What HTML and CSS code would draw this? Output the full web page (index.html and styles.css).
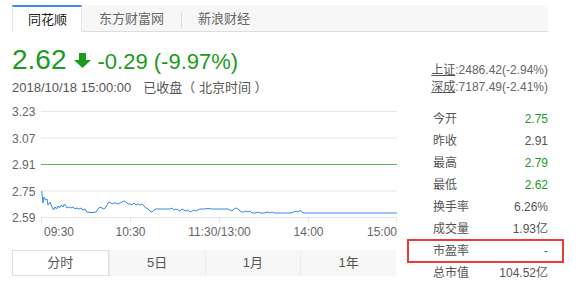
FILE: index.html
```html
<!DOCTYPE html>
<html lang="zh-CN">
<head>
  <meta charset="UTF-8" />
  <meta name="viewport" content="width=device-width, initial-scale=1.0" />
  <title>行情</title>
  <link rel="stylesheet" href="styles.css">
</head>
<body>
  <div class="tabs">
    <div class="tab active">同花顺</div>
    <div class="tab">东方财富网</div>
    <div class="tab sep">新浪财经</div>
  </div>

  <div class="quote">
    <div class="left">
      <div class="price-row">
        <span class="price">2.62</span>
        <svg class="arrow" width="17" height="15" viewBox="0 0 17 15">
          <polygon points="5,0 12,0 12,7 17,7 8.5,15 0,7 5,7" fill="#1b9b1b"/>
        </svg>
        <span class="change">-0.29 (-9.97%)</span>
      </div>
      <div class="time">2018/10/18 15:00:00<span class="state">已收盘（ 北京时间 ）</span></div>
    </div>
    <div class="index">
      <div><a href="#">上证</a>:2486.42(-2.94%)</div>
      <div><a href="#">深成</a>:7187.49(-2.41%)</div>
    </div>
  </div>

  <div class="main">
    <div class="chart-col">
      <svg class="chart" width="386" height="140" viewBox="12 100 386 140">
        <g stroke="#e6e6e6" stroke-width="1">
          <line x1="41" y1="111.5" x2="397" y2="111.5"/>
          <line x1="41" y1="138" x2="397" y2="138"/>
          <line x1="41" y1="191" x2="397" y2="191"/>
          <line x1="41" y1="217.5" x2="397" y2="217.5"/>
          <line x1="41.5" y1="217" x2="41.5" y2="223"/>
          <line x1="130.5" y1="217" x2="130.5" y2="223"/>
          <line x1="219.5" y1="217" x2="219.5" y2="223"/>
          <line x1="308.5" y1="217" x2="308.5" y2="223"/>
          <line x1="396.5" y1="217" x2="396.5" y2="223"/>
        </g>
        <line x1="41" y1="164.5" x2="397" y2="164.5" stroke="#62b462" stroke-width="1.2"/>
        <g class="axis">
          <text x="12" y="116">3.23</text>
          <text x="12" y="142.5">3.07</text>
          <text x="12" y="169">2.91</text>
          <text x="12" y="195.5">2.75</text>
          <text x="12" y="222">2.59</text>
          <text x="44" y="236">09:30</text>
          <text x="130.5" y="236" text-anchor="middle">10:30</text>
          <text x="219.5" y="236" text-anchor="middle">11:30/13:00</text>
          <text x="308.5" y="236" text-anchor="middle">14:00</text>
          <text x="397" y="236" text-anchor="end">15:00</text>
        </g>
        <polyline fill="none" stroke="#3388ee" stroke-width="1"
          points="41.7,191 43,203 44,197 45.5,200 47,199 48,205 50,202 52,207 53.5,210 55,207 56.5,209 58,206 59.5,208 61,205 63,207 64.5,204 66,206 67,208 69,207 71,208 73,207 75,209 77,208 79,209 81,208 83,210 85,209 86.7,212 90,212.5 93,212.5 96,212 98,209 100,207 102,208 104,209 106,207 108,203 110,202 112,204 114,203 116,203 118,204 120,203 122,202 124,201 126,202 128,204 130,204 132,205 134,203 136,205 138,204 140,205 142,204 144,206 146,208 148,209 150,211 152,212 154,210 156,209 158,209 162,209 166,209 170,209 172,208 174,210 176,209 178,210 180,211 182,209 184,210 186,211 188,210 190,212 192,211 194,210 196,211 198,210 200,209 204,209 208,208.5 212,209 216,209 220,209 224,209 228,209 230,210 232,211 234,209 236,208 238,209 240,211 242,212 244,212 246,211 248,212 250,211 252,213 256,213 258,212 260,213 264,213 268,212 270,213 272,212 274,213 280,213 290,213 294,212 296,211 298,212 300,210.5 302,212 304,213 397,213"/>
      </svg>
      <div class="periods">
        <div class="period active">分时</div>
        <div class="period">5日</div>
        <div class="period">1月</div>
        <div class="period">1年</div>
      </div>
    </div>

    <div class="stats">
      <div class="row"><span>今开</span><span class="up">2.75</span></div>
      <div class="row"><span>昨收</span><span>2.91</span></div>
      <div class="row"><span>最高</span><span class="up">2.79</span></div>
      <div class="row"><span>最低</span><span class="up">2.62</span></div>
      <div class="row"><span>换手率</span><span>6.26%</span></div>
      <div class="row"><span>成交量</span><span>1.93亿</span></div>
      <div class="row mark"><span>市盈率</span><span>-</span></div>
      <div class="row"><span>总市值</span><span>104.52亿</span></div>
    </div>
  </div>
</body>
</html>
```

FILE: styles.css
```css
body {
  margin: 0;
  padding: 5px 0 0 12px;
  background: #ffffff;
  font-family: "Liberation Sans", "Noto Sans CJK SC", sans-serif;
  color: #555;
}
.tabs {
  display: flex;
  width: 536px;
  height: 26px;
  background: #f7f7f7;
  border-bottom: 1px solid #dddddd;
}
.tab {
  position: relative;
  padding: 2px 17px 0;
  font-size: 13px;
  line-height: 24px;
  color: #666;
}
.tab.active {
  box-sizing: border-box;
  height: 27px;
  padding: 0 14px 0 15px;
  line-height: 25px;
  background: #fff;
  color: #222;
  border-top: 2px solid #3b8fe6;
  border-left: 1px solid #e3e3e3;
  border-right: 1px solid #e3e3e3;
}
.tab.sep::before {
  content: "";
  position: absolute;
  left: 0;
  top: 8px;
  height: 15px;
  border-left: 1px solid #dddddd;
}
.quote {
  display: flex;
  justify-content: space-between;
  width: 536px;
  padding-top: 12px;
}
.price-row {
  display: flex;
  align-items: baseline;
  height: 32px;
  color: #1b9b1b;
}
.price {
  font-size: 28px;
  line-height: 32px;
}
.arrow {
  align-self: center;
  margin: 1px 7px 0 7px;
}
.change {
  font-size: 22px;
  line-height: 32px;
}
.time {
  margin-top: 4px;
  font-size: 13px;
  line-height: 16px;
  color: #555;
}
.state {
  margin-left: 12px;
}
.index {
  margin-top: 18px;
  text-align: right;
  font-size: 12px;
  line-height: 17px;
  color: #666;
}
.index a {
  color: #555;
  text-decoration: underline;
}
.main {
  display: flex;
  margin-top: 4px;
}
.chart-col {
  width: 386px;
}
.chart {
  display: block;
}
.axis text {
  font-size: 12px;
  fill: #666;
  font-family: "Liberation Sans", sans-serif;
}
.periods {
  display: flex;
  width: 384px;
  margin-top: 10px;
  background: #f7f7f7;
}
.period {
  flex: 1;
  height: 26px;
  line-height: 26px;
  text-align: center;
  font-size: 13px;
  color: #555;
  border-left: 1px solid #ececec;
  box-sizing: border-box;
}
.period:first-child {
  border-left: none;
}
.period.active {
  background: #fff;
  border: 1px solid #dddddd;
  line-height: 24px;
}
.stats {
  width: 155px;
  margin-left: 10px;
  padding-top: 8px;
  font-size: 12px;
}
.row {
  display: flex;
  justify-content: space-between;
  height: 22px;
  line-height: 22px;
  padding: 0 15px 0 25px;
  color: #555;
}
.row .up {
  color: #1b9b1b;
}
.row.mark {
  outline: 2px solid #f03a3a;
  outline-offset: -1px;
}
```
